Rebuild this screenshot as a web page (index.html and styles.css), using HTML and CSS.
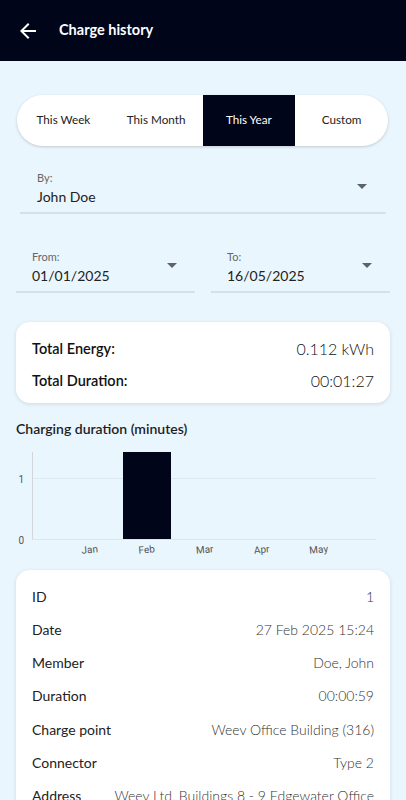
FILE: index.html
```html
<!DOCTYPE html>
<html lang="en">
<head>
  <meta charset="UTF-8" />
  <meta name="viewport" content="width=device-width, initial-scale=1.0"/>
  <title>Charge history</title>
  <link rel="stylesheet" href="styles.css">
</head>
<body>

<!-- App bar -->
<header class="app-bar">
  <button class="back-btn" aria-label="Back">
    <svg viewBox="0 0 24 24" width="24" height="24"><path fill="#fff" d="M20 11H7.83l5.59-5.59L12 4l-8 8 8 8 1.41-1.41L7.83 13H20v-2z"/></svg>
  </button>
  <h1 class="title">Charge history</h1>
</header>

<main class="content">

  <!-- Period selector -->
  <div class="segmented">
    <button class="segment">This Week</button>
    <button class="segment">This Month</button>
    <button class="segment selected">This Year</button>
    <button class="segment">Custom</button>
  </div>

  <!-- Member -->
  <div class="select-field by-field">
    <div class="field-text">
      <div class="field-label">By:</div>
      <div class="field-value">John Doe</div>
    </div>
    <span class="caret"></span>
  </div>

  <!-- Dates -->
  <div class="date-row">
    <div class="select-field">
      <div class="field-text">
        <div class="field-label">From:</div>
        <div class="field-value">01/01/2025</div>
      </div>
      <span class="caret"></span>
    </div>
    <div class="select-field">
      <div class="field-text">
        <div class="field-label">To:</div>
        <div class="field-value">16/05/2025</div>
      </div>
      <span class="caret"></span>
    </div>
  </div>

  <!-- Totals -->
  <div class="card totals">
    <div class="total-row">
      <span class="total-label">Total Energy:</span>
      <span class="total-value">0.112 kWh</span>
    </div>
    <div class="total-row">
      <span class="total-label">Total Duration:</span>
      <span class="total-value">00:01:27</span>
    </div>
  </div>

  <!-- Chart -->
  <h2 class="section-title">Charging duration (minutes)</h2>
  <div class="chart">
    <div class="y-axis">
      <span class="y-tick" style="bottom: 69%">1</span>
      <span class="y-tick" style="bottom: 0%">0</span>
    </div>
    <div class="plot">
      <div class="grid-line" style="bottom: 69%"></div>
      <div class="slot"></div>
      <div class="slot"><div class="bar" style="height: 100%"></div></div>
      <div class="slot"></div>
      <div class="slot"></div>
      <div class="slot"></div>
    </div>
  </div>
  <div class="x-axis">
    <span>Jan</span>
    <span>Feb</span>
    <span>Mar</span>
    <span>Apr</span>
    <span>May</span>
  </div>

  <!-- Session detail -->
  <div class="card details">
    <div class="detail-row"><span class="detail-label">ID</span><span class="detail-value">1</span></div>
    <div class="detail-row"><span class="detail-label">Date</span><span class="detail-value">27 Feb 2025 15:24</span></div>
    <div class="detail-row"><span class="detail-label">Member</span><span class="detail-value">Doe, John</span></div>
    <div class="detail-row"><span class="detail-label">Duration</span><span class="detail-value">00:00:59</span></div>
    <div class="detail-row"><span class="detail-label">Charge point</span><span class="detail-value">Weev Office Building (316)</span></div>
    <div class="detail-row"><span class="detail-label">Connector</span><span class="detail-value">Type 2</span></div>
    <div class="detail-row"><span class="detail-label">Address</span><span class="detail-value">Weev Ltd, Buildings 8 - 9 Edgewater Office Park, Edgewater Road, Belfast</span></div>
  </div>

</main>

</body>
</html>
```

FILE: styles.css
```css
html, body {
  overflow: hidden;
}

body {
  font-family: Lato, "Open Sans", sans-serif;
  margin: 0;
  background-color: #eaf6fd;
  color: #1d1d1f;
}

.app-bar {
  background-color: #000519;
  height: 61px;
  display: flex;
  align-items: center;
  padding-left: 16px;
}

.back-btn {
  background: none;
  border: none;
  padding: 0;
  width: 24px;
  height: 24px;
  cursor: pointer;
}

.title {
  color: white;
  font-size: 14.5px;
  font-weight: 700;
  margin: 0 0 2px 19px;
}

.content {
  padding: 34px 16px 0;
}

/* Period selector */
.segmented {
  display: grid;
  grid-template-columns: repeat(4, 1fr);
  height: 51px;
  margin: 0 2px 0 1px;
  background: white;
  border-radius: 26px;
  overflow: hidden;
  box-shadow: 0 1px 3px rgba(0, 0, 0, 0.18);
}

.segment {
  background: none;
  border: none;
  padding: 0 0 3px;
  font-family: inherit;
  font-size: 11.7px;
  color: #222;
  cursor: pointer;
}

.segment.selected {
  background-color: #000519;
  color: white;
}

/* Select fields */
.select-field {
  display: flex;
  justify-content: space-between;
  align-items: center;
  padding: 0 18px 4px 16px;
  border-bottom: 2px solid #d3e2ea;
}

.by-field {
  margin: 24px 4px 0;
  padding-left: 17px;
  padding-right: 19px;
}

.field-label {
  font-size: 11px;
  line-height: 16px;
  color: #666;
}

.field-value {
  font-size: 14px;
  line-height: 22px;
  color: #222;
}

.caret {
  width: 0;
  height: 0;
  border-left: 5px solid transparent;
  border-right: 5px solid transparent;
  border-top: 5px solid #5f6368;
  margin-bottom: 6px;
}

.date-row {
  display: grid;
  grid-template-columns: 1fr 1fr;
  gap: 16px;
  margin-top: 35px;
}

/* Cards */
.card {
  background: white;
  border-radius: 14px;
  box-shadow: 0 1px 4px rgba(0, 0, 0, 0.12);
}

.totals {
  margin-top: 29px;
  padding: 15px 16px 12px;
  display: flex;
  flex-direction: column;
  gap: 10px;
}

.total-row {
  display: flex;
  justify-content: space-between;
  align-items: center;
  height: 22px;
}

.total-label {
  font-size: 14.5px;
  font-weight: 600;
  color: #111;
}

.total-value {
  font-size: 16px;
  font-weight: 300;
  color: #111;
}

/* Chart */
.section-title {
  font-size: 14px;
  font-weight: 600;
  line-height: 18px;
  margin: 17px 0 0;
}

.chart {
  display: flex;
  margin-top: 14px;
  height: 88px;
}

.y-axis {
  position: relative;
  width: 16px;
}

.y-tick {
  position: absolute;
  right: 8px;
  transform: translateY(50%);
  font-family: Roboto, "Liberation Sans", sans-serif;
  font-size: 10px;
  color: #555;
}

.plot {
  position: relative;
  display: flex;
  align-items: flex-end;
  width: 344px;
  padding: 0 28.67px;
  box-sizing: border-box;
  border-left: 1px solid #d2d6da;
  border-bottom: 1px solid #d8e6ee;
}

.grid-line {
  position: absolute;
  left: 0;
  right: 0;
  border-top: 1px solid #dce9f1;
}

.slot {
  flex: 1;
  height: 100%;
  display: flex;
  justify-content: center;
  align-items: flex-end;
}

.bar {
  position: relative;
  z-index: 1;
  width: 48px;
  background-color: #000519;
}

.x-axis {
  display: flex;
  padding-left: 45px;
  width: 286.67px;
  margin-top: 4px;
}

.x-axis span {
  flex: 1;
  text-align: center;
  font-family: Roboto, "Liberation Sans", sans-serif;
  font-size: 10px;
  color: #555;
  transform: rotate(-5deg);
}

/* Detail list */
.details {
  margin-top: 15px;
  padding: 10px 16px;
}

.detail-row {
  display: flex;
  justify-content: space-between;
  gap: 29px;
  padding: 6.65px 0;
  font-size: 14px;
  line-height: 20px;
}

.detail-label {
  color: #222;
  white-space: nowrap;
}

.detail-value {
  color: #333;
  font-weight: 300;
  text-align: right;
}
```
